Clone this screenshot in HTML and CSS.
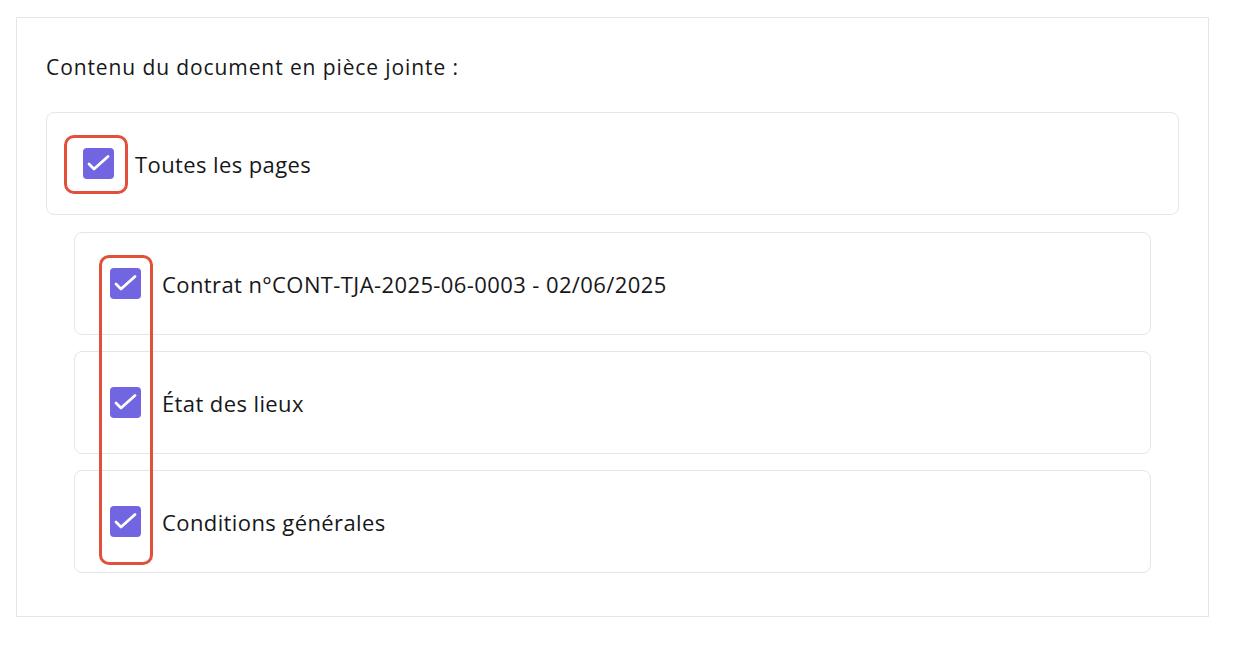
FILE: index.html
```html
<!DOCTYPE html>
<html lang="fr">
<head>
    <meta charset="UTF-8">
    <title>Contenu du document</title>
    <link rel="stylesheet" href="styles.css">
</head>
<body>
    <div class="panel">
        <p class="title">Contenu du document en pièce jointe :</p>

        <div class="card card-main">
            <label class="row">
                <span class="check"><svg viewBox="0 0 31 31"><path d="M6 16l5 5 14-12.5"/></svg></span>
                <span>Toutes les pages</span>
            </label>
            <span class="highlight hl-main"></span>
        </div>

        <div class="sublist">
            <div class="card">
                <label class="row">
                    <span class="check"><svg viewBox="0 0 31 31"><path d="M6 16l5 5 14-12.5"/></svg></span>
                    <span>Contrat n°CONT-TJA-2025-06-0003 - 02/06/2025</span>
                </label>
            </div>
            <div class="card">
                <label class="row">
                    <span class="check"><svg viewBox="0 0 31 31"><path d="M6 16l5 5 14-12.5"/></svg></span>
                    <span>État des lieux</span>
                </label>
            </div>
            <div class="card">
                <label class="row">
                    <span class="check"><svg viewBox="0 0 31 31"><path d="M6 16l5 5 14-12.5"/></svg></span>
                    <span>Conditions générales</span>
                </label>
            </div>
            <span class="highlight hl-sub"></span>
        </div>
    </div>
</body>
</html>
```

FILE: styles.css
```css
body {
    margin: 0;
    padding: 17px 0 0 16px;
    font-family: "Open Sans", "Noto Sans", sans-serif;
    color: #17171a;
    background-color: #ffffff;
}
.panel {
    width: 1193px;
    box-sizing: border-box;
    border: 1px solid #e3e6ea;
    padding: 0 29px 43px 29px;
}
.title {
    margin: 0;
    padding: 35px 0 31px 0;
    font-size: 21px;
    line-height: 28px;
    letter-spacing: 0.9px;
}
.card {
    position: relative;
    height: 103px;
    box-sizing: border-box;
    border: 1px solid #e3e6ea;
    border-radius: 8px;
    display: flex;
    align-items: center;
    padding-left: 36px;
}
.row {
    display: flex;
    align-items: center;
    gap: 21px;
    font-size: 22px;
    letter-spacing: 0.4px;
}
.check {
    width: 31px;
    height: 31px;
    border-radius: 4px;
    background-color: #7265e1;
    display: flex;
}
.check svg {
    width: 31px;
    height: 31px;
    fill: none;
    stroke: #ffffff;
    stroke-width: 2.8;
    stroke-linecap: round;
    stroke-linejoin: round;
}
.sublist {
    position: relative;
    margin: 17px 28px 0 28px;
    display: flex;
    flex-direction: column;
    gap: 16px;
}
.sublist .card {
    padding-left: 35px;
}
.highlight {
    position: absolute;
    box-sizing: border-box;
    border: 3px solid #e2503c;
    border-radius: 10px;
}
.hl-main {
    left: 17px;
    top: 22px;
    width: 64px;
    height: 59px;
}
.hl-sub {
    left: 25px;
    top: 23px;
    width: 54px;
    height: 310px;
}
```
